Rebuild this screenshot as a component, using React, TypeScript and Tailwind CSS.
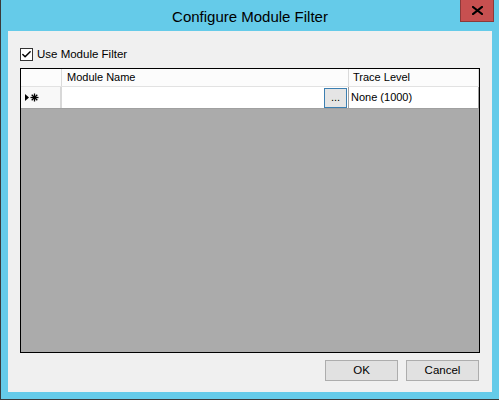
import { Check } from 'lucide-react'

const font = { fontFamily: '"Liberation Sans", Arial, sans-serif' }

function RowMarker(): React.JSX.Element {
  // small triangle + asterisk shown in the new-row header cell
  return (
    <svg width="14" height="9" viewBox="0 0 14 9" className="block">
      <polygon points="0,1 0,8 4,4.5" fill="#000" />
      <g stroke="#000" strokeWidth="1.3">
        <line x1="9.5" y1="0.5" x2="9.5" y2="8.5" />
        <line x1="5.5" y1="4.5" x2="13.5" y2="4.5" />
        <line x1="6.7" y1="1.7" x2="12.3" y2="7.3" />
        <line x1="12.3" y1="1.7" x2="6.7" y2="7.3" />
      </g>
    </svg>
  )
}

function App(): React.JSX.Element {
  return (
    <div className="w-[499px] h-[402px] bg-white overflow-hidden" style={font}>
      <div className="h-[400px] bg-[#65cbe9] border-l border-b border-[#3a3a3a] flex flex-col">
        {/* Title bar */}
        <div className="relative h-[31px] shrink-0 flex items-center justify-center">
          <span className="text-[15px] text-black leading-none mt-[1px]">Configure Module Filter</span>
          <div className="absolute right-[5px] top-0 w-[34px] h-[22px] bg-[#c75050] border border-t-0 border-[#8c3a3a] flex items-center justify-center">
            <svg width="11" height="9" viewBox="0 0 11 9">
              <path d="M1 1 L10 8 M10 1 L1 8" stroke="#000" strokeWidth="2.2" strokeLinecap="square" />
            </svg>
          </div>
        </div>

        {/* Client area */}
        <div className="mx-[7px] h-[361px] bg-[#f0f0f0] flex flex-col px-[12px] pt-[16px] text-[11.5px] text-black">
          <label className="flex items-center gap-[4px] h-[13px] mt-[1px]">
            <span className="w-[13px] h-[13px] bg-white border border-[#333] flex items-center justify-center">
              <Check size={11} strokeWidth={3.2} color="#000" />
            </span>
            <span className="leading-none">Use Module Filter</span>
          </label>

          {/* Grid */}
          <div className="mt-[7px] w-[460px] h-[285px] border border-black bg-[#ababab] flex flex-col text-[11px]">
            <div className="flex h-[18px] bg-[#fcfcfc] border-b border-[#e2e2e2]">
              <div className="w-[41px] border-r border-[#dadada]" />
              <div className="w-[287px] border-r border-[#dadada] pl-[5px] flex items-center">Module Name</div>
              <div className="flex-1 pl-[4px] flex items-center border-r border-[#dadada]">Trace Level</div>
            </div>
            <div className="flex h-[22px] bg-white border-b border-[#a0a0a0]">
              <div className="w-[41px] bg-[#f8f8f8] border-r-[2px] border-[#d8d8d8] flex items-center pl-[4px]">
                <RowMarker />
              </div>
              <div className="w-[287px] border-r border-[#a0a0a0] flex justify-end items-center pr-[1px]">
                <div className="w-[23px] h-[20px] bg-[#e5e5e5] border border-[#3c7fb1] flex items-center justify-center text-[11px] leading-none">
                  ...
                </div>
              </div>
              <div className="flex-1 pl-[2px] flex items-center border-r border-[#a0a0a0]">None (1000)</div>
            </div>
          </div>

          {/* Buttons */}
          <div className="mt-[7px] flex justify-end gap-[8px] pr-[1px]">
            <button className="w-[73px] h-[21px] bg-[#e1e1e1] border border-[#adadad] leading-none">OK</button>
            <button className="w-[73px] h-[21px] bg-[#e1e1e1] border border-[#adadad] leading-none">Cancel</button>
          </div>
        </div>
      </div>
    </div>
  )
}

export default App
